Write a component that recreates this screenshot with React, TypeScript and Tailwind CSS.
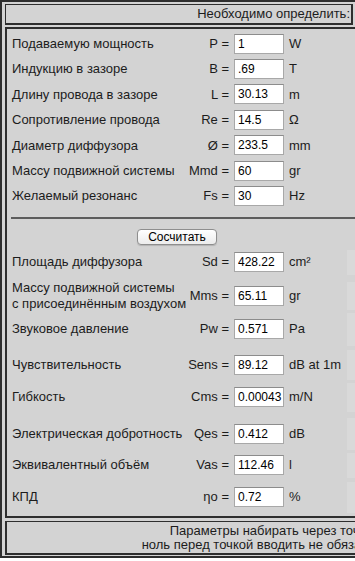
import React from 'react';

const inputs = [
    { label: "Подаваемую мощность", sym: "P =", value: "1", unit: "W" },
    { label: "Индукцию в зазоре", sym: "B =", value: ".69", unit: "T" },
    { label: "Длину провода в зазоре", sym: "L =", value: "30.13", unit: "m" },
    { label: "Сопротивление провода", sym: "Re =", value: "14.5", unit: "Ω" },
    { label: "Диаметр диффузора", sym: "Ø =", value: "233.5", unit: "mm" },
    { label: "Массу подвижной системы", sym: "Mmd =", value: "60", unit: "gr" },
    { label: "Желаемый резонанс", sym: "Fs =", value: "30", unit: "Hz" },
];

const results = [
    { label: ["Площадь диффузора"], sym: "Sd =", value: "428.22", unit: "cm²", row: "h-[25px]" },
    { label: ["Массу подвижной системы", "с присоединённым воздухом"], sym: "Mms =", value: "65.11", unit: "gr", row: "h-[28px] mt-[7px]" },
    { label: ["Звуковое давление"], sym: "Pw =", value: "0.571", unit: "Pa", row: "h-[33px] mt-[3px]" },
    { label: ["Чувствительность"], sym: "Sens =", value: "89.12", unit: "dB at 1m", row: "h-[30px] mt-[4px]" },
    { label: ["Гибкость"], sym: "Cms =", value: "0.00043", unit: "m/N", row: "h-[29px] mt-[3px]" },
    { label: ["Электрическая добротность"], sym: "Qes =", value: "0.412", unit: "dB", row: "h-[32px] mt-[6px]" },
    { label: ["Эквивалентный объём"], sym: "Vas =", value: "112.46", unit: "l", row: "h-[25px] mt-[3px]" },
    { label: ["КПД"], sym: "ηo =", value: "0.72", unit: "%", row: "h-[31px] mt-[4px]" },
];

function Field({ value }: { value: string }) {
    return (
        <input
            readOnly
            value={value}
            className="ml-[5px] w-[50px] h-[20px] shrink-0 bg-white border border-[#a8a8a8] border-t-[#8c8c8c] pl-[3px] text-[12px] text-black outline-none"
        />
    );
}

export default function App() {
    return (
        <div className="w-[355px] h-[561px] overflow-hidden bg-white" style={{ fontFamily: '"Liberation Sans", Arial, sans-serif' }}>
            <div className="w-[545px] h-[558px] border-2 border-[#2e2e2e] bg-[#d3d3d3] pt-[2px] pl-[3px] text-[13px] text-[#1c1c1c]">
                {/* Header */}
                <div className="w-[348px] h-[21px] border border-r-2 border-b-2 border-[#2e2e2e] flex items-center justify-end pr-[1px]">
                    Необходимо определить:
                </div>

                {/* Main table */}
                <div className="w-[534px] h-[491px] mt-[2px] border-2 border-[#2e2e2e] pt-[2px]">
                    {inputs.map((item, i) => (
                        <div key={i} className="flex items-center h-[25.4px] pl-[5px]">
                            <div className="w-[170px] shrink-0 whitespace-nowrap">{item.label}</div>
                            <div className="w-[47px] shrink-0 text-right whitespace-nowrap">{item.sym}</div>
                            <Field value={item.value} />
                            <div className="ml-[5px] whitespace-nowrap">{item.unit}</div>
                        </div>
                    ))}

                    <div className="ml-[4px] mt-[8px] h-[2px] bg-[#5c5c5c]"></div>

                    <div className="w-[340px] mt-[10px] flex justify-center">
                        <button className="w-[80px] h-[16px] rounded-[4px] border border-[#8e8e8e] bg-gradient-to-b from-white to-[#ececec] text-[12px] leading-none text-black shadow-[0_1px_1px_rgba(0,0,0,0.15)]">
                            Сосчитать
                        </button>
                    </div>

                    <div className="mt-[5px]">
                        {results.map((item, i) => (
                            <div key={i} className={"flex items-center pl-[5px] " + item.row}>
                                <div className="w-[170px] shrink-0 whitespace-nowrap leading-[16px]">
                                    {item.label.map((l, j) => (
                                        <div key={j}>{l}</div>
                                    ))}
                                </div>
                                <div className="w-[47px] shrink-0 text-right whitespace-nowrap">{item.sym}</div>
                                <Field value={item.value} />
                                <div className="ml-[5px] w-[58px] shrink-0 whitespace-nowrap">{item.unit}</div>
                                <div className="self-stretch w-[160px] bg-[#d9d9d9]"></div>
                            </div>
                        ))}
                    </div>
                </div>

                {/* Footer note */}
                <div className="w-[534px] h-[34px] mt-[3px] border-2 border-t border-[#2e2e2e] flex flex-col items-center justify-center leading-[14px]">
                    <div>Параметры набирать через точку,</div>
                    <div>ноль перед точкой вводить не обязательно</div>
                </div>
            </div>
        </div>
    );
}
